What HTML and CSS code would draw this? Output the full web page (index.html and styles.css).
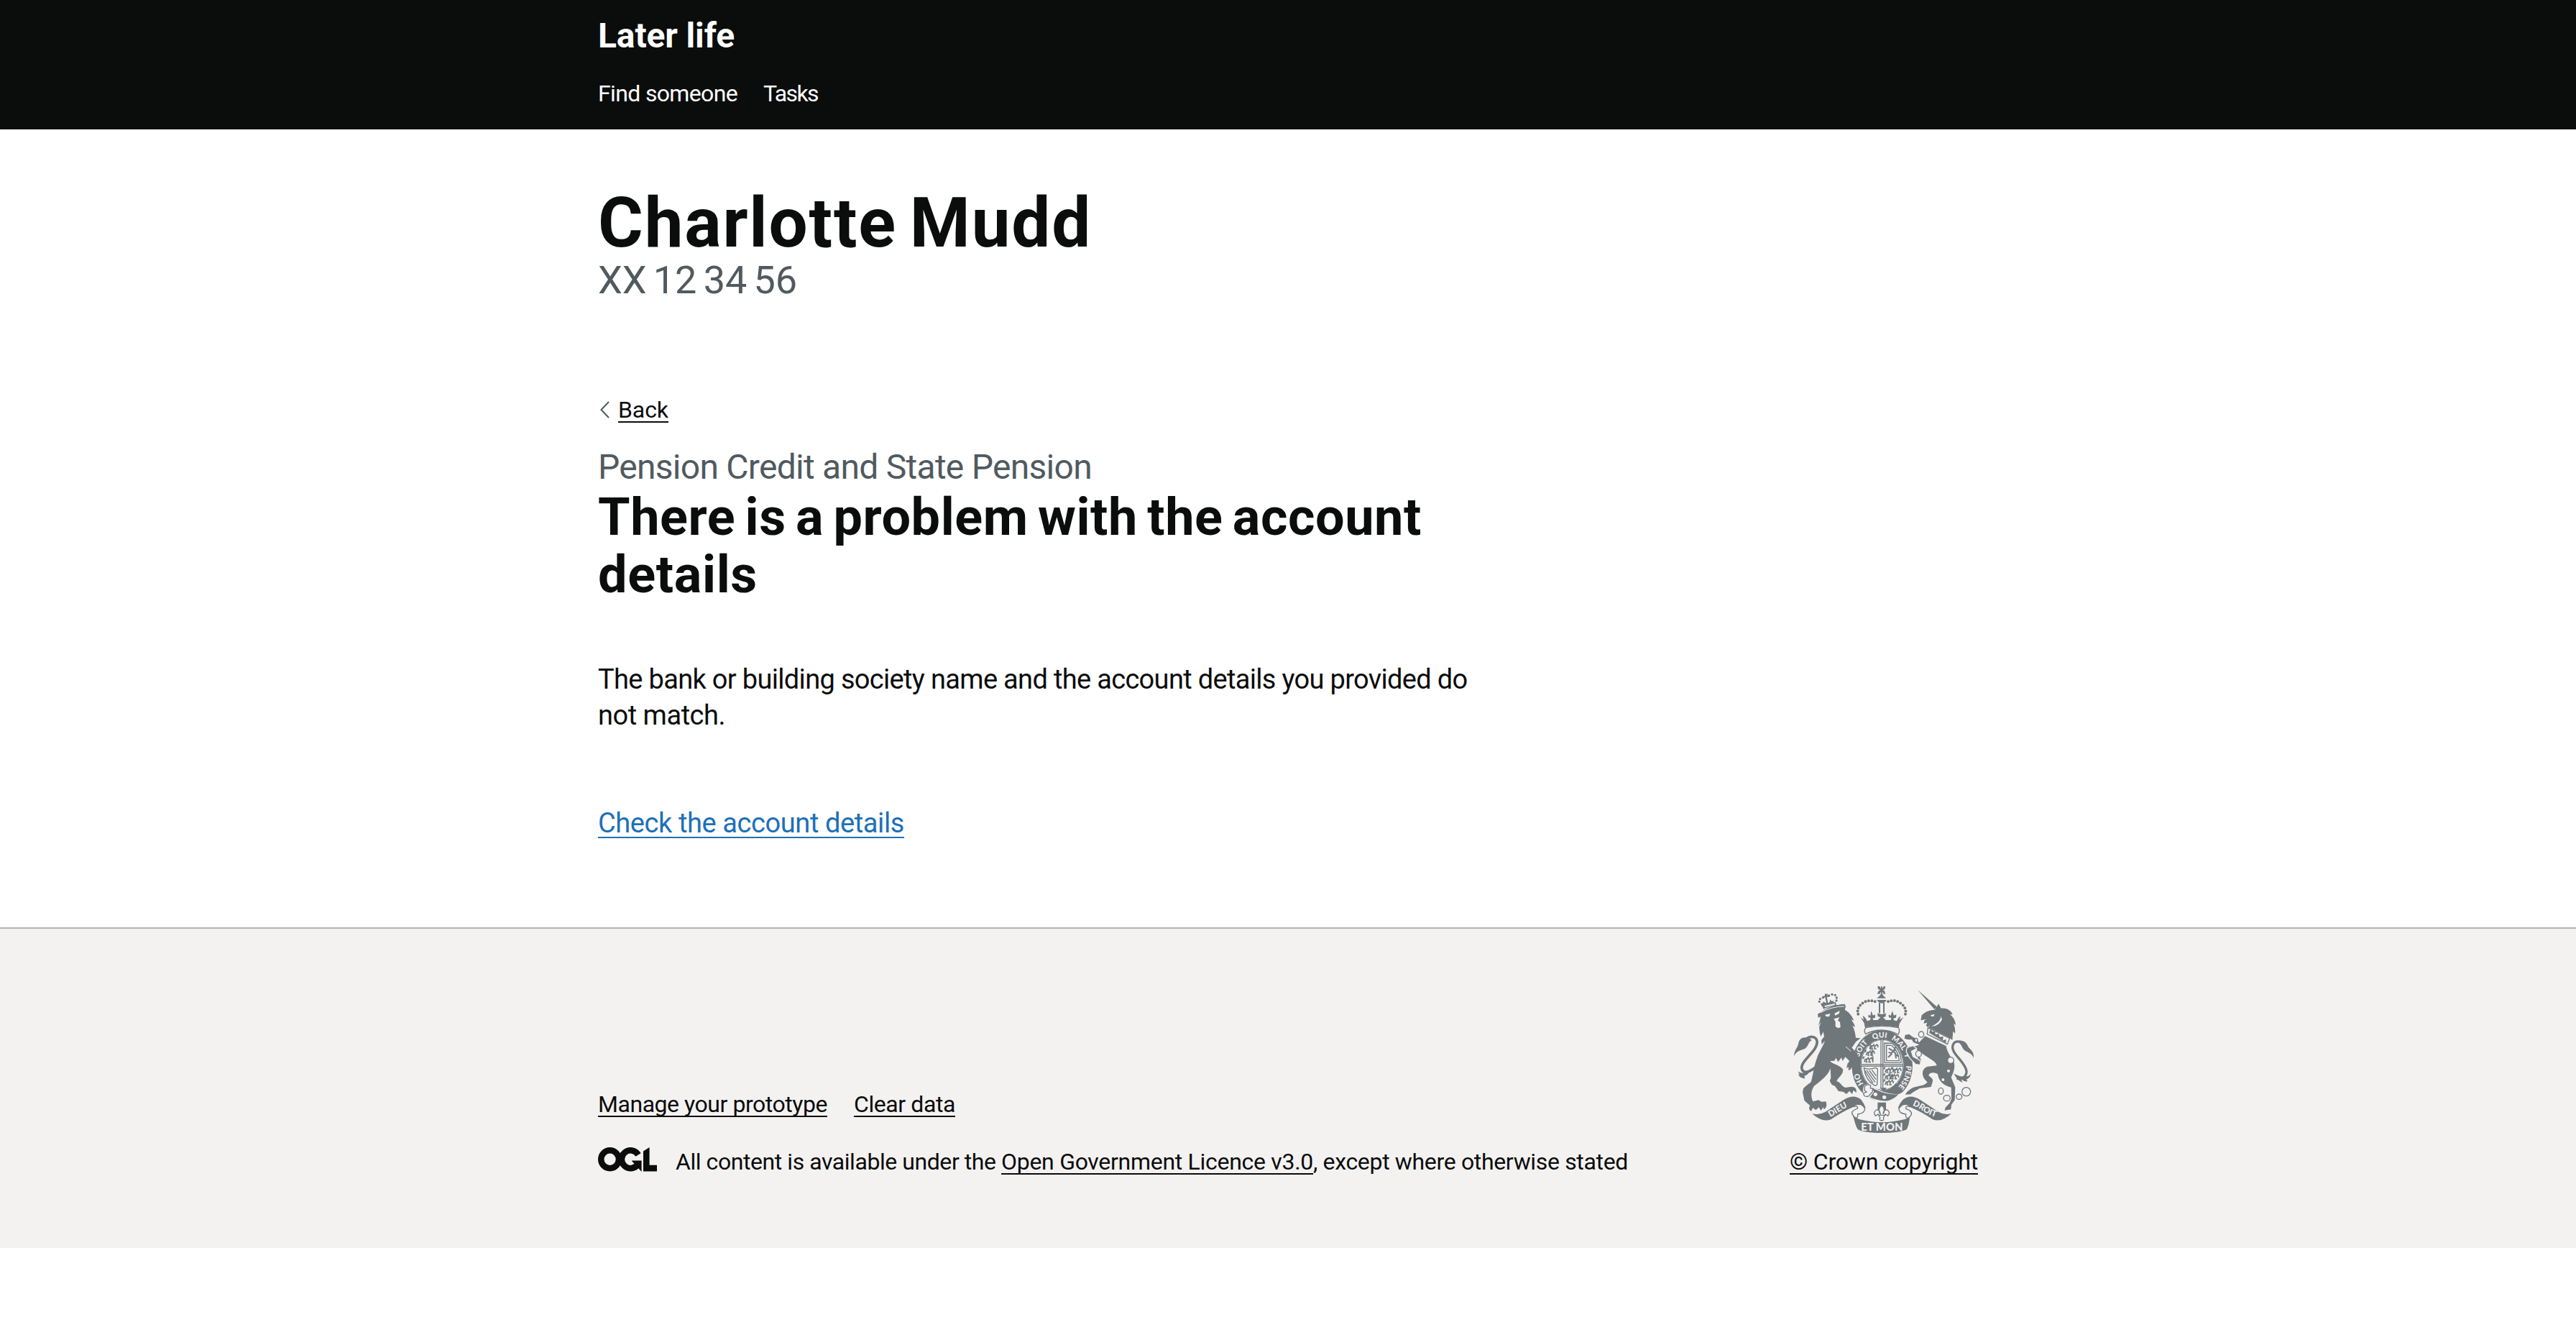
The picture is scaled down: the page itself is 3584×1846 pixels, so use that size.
FILE: index.html
```html
<!DOCTYPE html>
<html lang="en">
<head>
<meta charset="utf-8">
<title>There is a problem with the account details</title>
<link rel="stylesheet" href="styles.css">
</head>
<body>
<header class="header">
  <div class="container">
    <div class="service-name">Later life</div>
    <nav class="nav"><a class="nav-find">Find someone</a><a class="nav-tasks">Tasks</a></nav>
  </div>
</header>
<main class="container main">
  <h1 class="name">Charlotte Mudd</h1>
  <p class="number">XX 12 34 56</p>
  <a class="back">
    <svg class="chevron" viewBox="0 0 16 24" aria-hidden="true"><path d="M15 1 4.500 12 15 23"/></svg>
    <span class="back-text">Back</span>
  </a>
  <p class="caption">Pension Credit and State Pension</p>
  <h2 class="title"><span class="title-first">There is a problem with the account</span><br><span class="title-last">details</span></h2>
  <p class="body-text"><span class="body-first">The bank or building society name and the account details you provided do</span><br><span class="body-last">not match.</span></p>
  <p class="action"><a class="link">Check the account details</a></p>
</main>
<footer class="footer">
  <div class="container footer-row">
    <div>
      <div class="footer-links"><a class="underlined manage">Manage your prototype</a><a class="underlined clear">Clear data</a></div>
      <div class="licence">
        <svg class="ogl" viewBox="0 0 82 34" role="img" aria-label="OGL">
          <g fill="none" stroke="#0b0c0c" stroke-width="8.500">
            <ellipse cx="16.600" cy="16.700" rx="12.350" ry="12.450"/>
            <path d="M56 10.500A12.400 12.400 0 1 0 56 23"/>
          </g>
          <path fill="#0b0c0c" d="M47 18.500h13.600V34L47 19zM63 5.500 71.600 0v24.700H82V33.500H63z"/>
        </svg>
        <p class="licence-text"><span class="lic-a">All content is available under the&nbsp;</span><a class="underlined lic-b">Open Government Licence v3.0</a><span class="lic-c">, except where otherwise stated</span></p>
      </div>
    </div>
    <div class="copyright">
      <svg class="crest" viewBox="60 60 780 630" aria-hidden="true">
        <defs>
          <path id="garter-line" d="M446 516A100 118 0 0 1 446 280A100 118 0 0 1 446 516"/>
          <path id="left-motto" d="M217 619Q255 597 285 578Q306 566 322 565"/>
          <path id="right-motto" d="M556 557Q592 569 617 588Q650 608 688 616"/>
          <g id="lion-passant" fill="none" stroke-width="5">
            <path d="M2 12V4H8M8 14Q20 8 30 13M10 14 6 24M16 13 14 24H20M28 12 26 24H34M30 12 36 6 40 11V18M26 6H20"/>
          </g>
        </defs>

        <!-- lion -->
        <path class="ink-line" stroke-width="11" d="M175 398C150 420 120 436 111 412C101 377 181 335 174 294C169 274 145 273 131 284"/>
        <path class="ink" d="M78 358C79 332 92 325 96 307C99 286 112 278 127 280C139 278 149 287 152 292C138 296 139 317 124 326C102 335 86 337 78 358zM96 420C105 432 113 425 120 430L146 415C140 430 133 438 121 440L124 451C109 449 101 445 96 434L102 434Q96 429 96 420z"/>
        <path class="ink" d="M177 182 194 172C220 151 252 143 290 140L294 151 290 164C309 174 322 193 328 209L317 204C323 216 331 223 333 236L322 230C331 246 334 265 336 281L356 283L337 297 319 323 333 338 352 355 348 376 356 405 348 425 338 411 329 427 321 408 306 418 308 402 297 407 302 387 312 380 292 361 281 378 276 364 262 382 253 365 247 377 229 378C235 390 267 393 282 412C286 435 258 450 256 463C273 466 276 484 292 489L318 485C333 486 341 494 338 510L326 500 321 516 309 503 297 516 283 506 264 504 249 483 236 477 227 461 232 448 230 408C220 440 190 460 162 482C150 500 146 522 157 547L180 541 193 548 211 547C217 560 213 576 202 580L201 570 190 585 182 571 169 583 157 573 150 587C139 584 140 570 145 564L130 551 121 542 117 522 114 509 117 492 133 478 149 466C161 420 159 407 174 365C181 340 200 318 207 293L194 309 192 292 204 275 200 256 190 276 186 262 183 237 191 214 180 231 187 204 189 193 179 197z"/>
        <path class="ground" d="M207 185 229 180 225 193 212 192zM247 179 269 168 266 180 250 188zM244 202 268 196 261 209 270 215 272 236Q262 246 251 233L251 214z"/>
        <path class="ground-line" stroke-width="3" d="M188 176Q236 150 288 150M294 318 331 350 341 382"/>
        <g class="ink">
          <path d="M194 145 251 132 256 147Q226 149 201 161z"/>
          <path class="ground" d="m205 147 42-9 2 6-42 9z"/>
          <circle cx="184" cy="130" r="5"/><circle cx="187" cy="119" r="5"/><circle cx="199" cy="113" r="5"/><circle cx="224" cy="105" r="5"/><circle cx="237" cy="100" r="5"/><circle cx="250" cy="103" r="5"/><circle cx="256" cy="114" r="5"/><circle cx="255" cy="126" r="5"/>
          <path d="m207 96 7 3 5-3-2 8 6-1 1 8-9-1 5 26 7-4 2-11 7 8 8-3-1 11-49 12-5-11 10-2 1-7 9 6 4-1-5-22-8 2-1-7 8-1z"/>
        </g>

        <!-- unicorn -->
        <path class="ink-line" stroke-width="10" d="M758 450C773 458 800 444 798 420C793 379 724 342 743 308C749 294 764 295 778 300"/>
        <path class="ink" d="M755 297C775 287 796 295 804 316C811 331 830 335 828 365C816 339 797 343 787 331C777 319 775 300 755 297zM745 430C763 440 782 447 790 440 803 445 812 439 816 429 815 445 807 451 797 455L803 462C790 467 779 455 773 449L782 468C766 461 754 450 745 430z"/>
        <path class="ink" d="m594 81 82 72-12 9z"/>
        <path class="ink" d="M607 208 611 187C628 171 642 166 665 164L673 154 681 139 692 158C715 154 735 168 740 184L729 183C744 195 752 211 753 228L744 222C750 238 752 250 750 263L742 254 739 291 727 281 640 238 646 224 638 237 629 230 634 218 619 221 623 207 633 203z"/>
        <path class="ground" d="m648 187 16-5-2 9-11 1zM690 190Q694 213 652 233Q682 234 696 205z"/>
        <path class="ink" d="M625 274 713 315C717 342 734 361 745 382C753 406 743 427 734 446L751 488 749 541 735 560 733 580 706 584 711 571 727 554 735 537 734 488C709 482 682 467 678 432C659 423 641 427 640 439C650 447 661 453 656 466L650 486 603 492 577 507 564 517 542 518C550 502 567 493 576 488L620 478 635 467 622 452C608 430 615 408 635 401L674 397C671 378 640 368 612 346L589 329 577 327 562 335 559 347 576 361 589 368 603 361 609 376 605 393 600 380 592 388 575 378 566 367 550 345 547 330 560 315 589 315 601 310 576 300 570 289 551 288 539 284 542 269 559 266 571 276 589 285 600 301z"/>
        <path class="ground ink-stroke" d="m637 239 91 44-10 25-84-42z"/>
        <path class="ink" d="m642 260 6-17 7 13 12-3 1 14 14-3 4 14 15-3-2 17 14-4-1 15z"/>
        <g class="link-rings">
          <ellipse cx="609" cy="267" rx="11" ry="12"/><ellipse cx="588" cy="291" rx="6" ry="8"/><ellipse cx="598" cy="348" rx="12" ry="13"/><circle cx="732" cy="375" r="13"/><circle cx="723" cy="419" r="8"/><circle cx="700" cy="456" r="8"/><ellipse cx="691" cy="503" rx="10" ry="13"/><ellipse cx="716" cy="533" rx="14" ry="12"/><ellipse cx="767" cy="527" rx="12" ry="11"/><circle cx="797" cy="506" r="18"/>
        </g>

        <!-- garter and shield -->
        <ellipse class="ground" cx="446" cy="398" rx="131" ry="152"/>
        <ellipse class="ink" cx="446" cy="398" rx="127" ry="148"/>
        <ellipse class="ground" cx="446" cy="394" rx="90" ry="107"/>
        <ellipse class="ink-line" stroke-width="3" cx="446" cy="394" rx="88" ry="105"/>
        <path class="ink-line" stroke-width="4" d="M441 290V492M449 290V492M359 392H534M359 399H534"/>
        <g class="shield-figures">
          <use href="#lion-passant" x="388" y="303"/><use href="#lion-passant" x="373" y="330"/><use href="#lion-passant" x="365" y="358"/>
          <use href="#lion-passant" x="452" y="402"/><use href="#lion-passant" x="452" y="428"/><use href="#lion-passant" x="452" y="453"/>
          <use href="#lion-passant" x="484" y="402"/><use href="#lion-passant" x="474" y="428"/>
          <path d="M397 305V330M404 330V357M407 358V384" fill="none" stroke-width="5"/>
          <path fill="none" stroke-width="4" d="M456 303V385H525Q528 340 487 304zM464 312 464 377H517Q516 340 485 313z"/>
          <path fill="none" stroke-width="6" d="M473 325 485 332 501 345 504 367M497 331 485 345 473 342M487 347 471 362M499 349 515 359M504 320Q493 326 501 335"/>
          <path fill="none" stroke-width="4" d="M370 407Q390 416 419 406L427 411 425 476Q418 486 410 477C383 461 374 438 370 407zM381 416 417 467M392 417 420 455M403 415 421 440M374 418 407 469"/>
        </g>
        <path class="ink" d="M435 490H465L455 505zM467 500Q486 493 503 470L519 491 499 517z"/>
        <g class="crest-text" font-size="31">
          <text><textPath href="#garter-line" startOffset="17%">HO</textPath></text>
          <text><textPath href="#garter-line" startOffset="35.500%">SOIT</textPath></text>
          <text><textPath href="#garter-line" startOffset="48.500%">QUI</textPath></text>
          <text><textPath href="#garter-line" startOffset="60.500%">MAL</textPath></text>
          <text><textPath href="#garter-line" startOffset="69%">Y</textPath></text>
          <text><textPath href="#garter-line" startOffset="82%">PENSE</textPath></text>
        </g>
        <path class="ground" d="M370 480Q388 467 402 481L414 489Q452 513 510 518L551 500 535 535 480 545 440 552 395 533 373 528Q360 506 370 480z"/>
        <path class="ink" d="M405 490C438 509 470 517 512 519Q495 537 470 544Q430 547 395 529L411 507z"/>
        <path class="ink-line" stroke-width="4" d="M373 483Q384 472 398 480L397 492 407 493 405 507 389 525Q369 530 368 512L381 507 372 500z"/>
        <circle class="ground" cx="418" cy="517" r="8"/><circle class="ground" cx="455" cy="529" r="8"/>

        <!-- paws that overlap the garter -->
        <path class="ink" d="M319 322 342 349 353 383 355 412 348 425 337 410 326 426 319 404 305 417 307 385z"/>
        <path class="ink ground-stroke" d="m550 321 26-7 14 12-22 12 7 21 31 17-1 18-19-2-26-27-14-27z"/>

        <!-- crown -->
        <path class="ground" d="M372 237H518L523 262Q445 236 368 262z"/>
        <path class="ground ink-stroke" d="M378 239Q445 225 514 239Q522 252 513 267Q445 232 377 265Q367 250 378 239z"/>
        <path class="ink" d="M355 194 369 206 365 188Q379 198 383 211L396 207 398 197 388 196 389 184 397 190 400 169 408 188 417 184 417 197 406 200 409 207 427 207 439 196 427 191V178L439 182H448L461 178V192L450 196 461 207 482 207 484 198 474 196 473 184 482 189 488 169 495 188 505 184 504 197 493 200 495 208 507 211Q511 198 522 190L519 206 535 194 518 222 515 238Q445 222 374 238L371 220z"/>
        <path class="ink" d="M427 66H459L456 86 460 98H448V102L462 116H424L439 102V98H426L430 86z"/>
        <path class="ground" d="M435 66 441 76V66zM446 66V76L453 66zM427 77 438 82 427 88zM460 77 449 82 460 88zM441 89 435 98H441zM446 89 453 98H446z"/>
        <path class="ink" d="M424 123H464Q459 136 444 137Q430 135 424 123z"/>
        <path class="ink-line" stroke-width="6" d="M435 134V178M453 134V178"/>
        <path class="bead-line" d="M416 130Q390 120 367 135C343 152 338 168 350 193M471 130Q499 119 523 137C547 154 549 176 538 193"/>

        <!-- motto scroll -->
        <path class="ink" d="M153 597Q182 605 209 590L285 540Q326 514 357 538Q369 553 377 573L361 572Q344 551 325 570Q275 592 232 622Q195 636 153 597z"/>
        <path class="ink" d="M735 597Q706 605 681 590L605 540Q565 514 534 538Q518 555 512 574L526 572Q543 554 562 570Q615 592 657 622Q694 636 735 597z"/>
        <path class="ground ink-stroke" d="M325 570Q345 560 343 576Q311 588 323 602L330 616Q347 619 344 600Q374 596 374 576Q360 554 343 560M564 570Q543 561 545 577Q576 588 566 605L556 617Q542 617 545 600Q514 596 516 576Q532 554 547 560"/>
        <path class="ink" d="M325 604Q335 616 350 621Q446 646 540 621Q557 615 562 606Q558 648 548 664Q519 678 444 678Q370 678 344 663Q333 647 325 604z"/>
        <g class="crest-text">
          <text font-size="35"><textPath href="#left-motto" startOffset="47%">DIEU</textPath></text>
          <text font-size="35"><textPath href="#right-motto" startOffset="49%">DROIT</textPath></text>
          <text x="445" y="670" font-size="43" textLength="174" lengthAdjust="spacingAndGlyphs">ET MON</text>
        </g>

        <!-- fleur-de-lis -->
        <path class="ink" d="M427 551H462V586H427z"/>
        <path class="ground ink-stroke" d="M444 562Q462 580 450 599Q452 579 467 582 482 591 470 607L459 600 451 614Q455 628 444 626 433 628 437 614L429 600 418 607Q406 592 422 582 438 580 438 600 425 580 444 562zM429 604H460"/>
      </svg>
      <a class="underlined crown-copyright">© Crown copyright</a>
    </div>
  </div>
</footer>
</body>
</html>
```
FILE: styles.css
```css
body {
  margin: 0;
  background: #fff;
  color: #0b0c0c;
  font-family: Roboto, sans-serif;
  font-size: 32px;
  line-height: 40px;
  white-space: nowrap;
}

h1, h2, p { margin: 0; }

.container {
  width: 1920px;
  margin: 0 auto;
}

/* Header */
.header {
  box-sizing: border-box;
  height: 180px;
  padding-top: 26px;
  background: #0b0c0c;
  color: #fff;
}
.service-name {
  font-size: 48px;
  font-weight: 700;
  line-height: 48px;
  letter-spacing: -0.0027em;
}
.nav {
  display: flex;
  gap: 36px;
  margin-top: 36px;
}
.nav-find { letter-spacing: -0.0203em; }
.nav-tasks { letter-spacing: -0.0499em; }

/* Main */
.main { padding: 80px 0 120px; }
.name {
  font-size: 96px;
  line-height: 100px;
  letter-spacing: 0.0189em;
  word-spacing: -0.08em;
}
.number {
  color: #505a5f;
  font-size: 54px;
  line-height: 60px;
  letter-spacing: -0.0028em;
  word-spacing: -0.07em;
}
.back {
  display: flex;
  align-items: center;
  gap: 12px;
  margin-top: 130px;
}
.chevron {
  width: 16px;
  height: 24px;
  fill: none;
  stroke: #505a5f;
  stroke-width: 2;
}
.back-text { letter-spacing: -0.0024em; }
.back-text,
.underlined {
  text-decoration: underline 2px;
  text-underline-offset: 5px;
  text-decoration-skip-ink: none;
}
.caption {
  margin-top: 30px;
  color: #505a5f;
  font-size: 48px;
  line-height: 60px;
  letter-spacing: -0.0152em;
}
.title {
  font-size: 72px;
  line-height: 80px;
}
.title-first {
  letter-spacing: 0.0076em;
  word-spacing: -0.07em;
}
.title-last { letter-spacing: 0.0091em; }
.body-text {
  margin-top: 80px;
  font-size: 38px;
  line-height: 50px;
}
.body-first { letter-spacing: -0.0177em; }
.body-last { letter-spacing: -0.0126em; }
.action {
  margin-top: 100px;
  font-size: 38px;
  line-height: 50px;
}
.link {
  color: #1d70b8;
  letter-spacing: -0.0106em;
  text-decoration: underline 2px;
  text-underline-offset: 6px;
}

/* Footer */
.footer {
  padding: 78px 0 100px;
  border-top: 2px solid #b1b4b6;
  background: #f3f2f1;
}
.footer-row {
  display: flex;
  align-items: flex-end;
  justify-content: space-between;
}
.footer-links {
  display: flex;
  gap: 37px;
  margin-bottom: 40px;
}
.manage { letter-spacing: -0.0143em; }
.clear { letter-spacing: -0.0128em; }
.licence {
  display: flex;
  align-items: flex-start;
  gap: 26px;
}
.ogl {
  width: 82px;
  height: 34px;
}
.lic-a { letter-spacing: -0.0137em; }
.lic-b { letter-spacing: -0.0092em; }
.lic-c { letter-spacing: -0.0106em; }
.copyright {
  display: flex;
  flex-direction: column;
  width: 262px;
}
.crown-copyright { letter-spacing: -0.0055em; }

/* Coat of arms */
.crest {
  width: 260px;
  height: 210px;
  margin-bottom: 16px;
}
.ink { fill: #6f777b; }
.ground { fill: #f3f2f1; }
.ink-line {
  fill: none;
  stroke: #6f777b;
}
.ground-line {
  fill: none;
  stroke: #f3f2f1;
}
.ink-stroke {
  stroke: #6f777b;
  stroke-width: 4;
}
.ground-stroke {
  stroke: #f3f2f1;
  stroke-width: 4;
}
.link-rings {
  fill: #f3f2f1;
  stroke: #6f777b;
  stroke-width: 4;
}
.shield-figures {
  fill: #6f777b;
  stroke: #6f777b;
}
.bead-line {
  fill: none;
  stroke: #6f777b;
  stroke-width: 12;
  stroke-linecap: round;
  stroke-dasharray: 0 13.500;
}
.crest-text {
  fill: #f3f2f1;
  font-family: Lato, sans-serif;
  font-weight: 900;
  text-anchor: middle;
}
```
